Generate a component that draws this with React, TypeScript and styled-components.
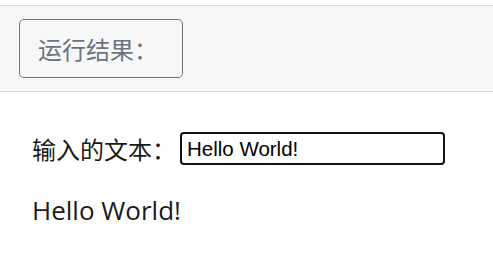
import styled, { createGlobalStyle } from 'styled-components';
import React, { useState } from 'react';

const GlobalStyle = createGlobalStyle`
    body {
        margin: 0;
        background: #ffffff;
        font-family: "Open Sans", "Noto Sans CJK SC", sans-serif;
        color: #212529;
    }
`

const Page = styled.div`
    padding-top: 5px;
`

const Toolbar = styled.div`
    display: flex;
    align-items: center;
    height: 85px;
    padding: 0 19px;
    background: #f7f7f7;
    border-top: 1px solid #dcdcdc;
    border-bottom: 1px solid #dcdcdc;
`

const ResultButton = styled.button`
    display: flex;
    align-items: center;
    box-sizing: border-box;
    width: 164px;
    height: 59px;
    padding: 0 0 0 18px;
    background: transparent;
    border: 1px solid #6c757d;
    border-radius: 5px;
    color: #6c757d;
    font-family: "Noto Sans CJK SC", sans-serif;
    font-size: 24px;
`

const Content = styled.div`
    padding: 40px 32px;
    display: flex;
    flex-direction: column;
    gap: 28px;
`

const Row = styled.label`
    display: flex;
    align-items: center;
    height: 33px;
    line-height: 33px;
    font-family: "Noto Sans CJK SC", sans-serif;
    font-size: 24px;
    color: #1a1a1a;
`

const TextInput = styled.input`
    box-sizing: border-box;
    width: 265px;
    height: 33px;
    margin-left: 4px;
    padding: 0 5px;
    border: 2px solid #111;
    border-radius: 4px;
    outline: none;
    font-family: "Liberation Sans", Arial, sans-serif;
    font-size: 20.5px;
    color: #000;
`

const Output = styled.div`
    font-family: "Open Sans", sans-serif;
    font-size: 26px;
    line-height: 34px;
    color: #1a1a1a;
`

function App() {
    const [text, setText] = useState('Hello World!')
    return (
        <Page>
            <GlobalStyle />
            <Toolbar>
                <ResultButton>运行结果：</ResultButton>
            </Toolbar>
            <Content>
                <Row>
                    输入的文本：
                    <TextInput value={text} onChange={e => setText(e.target.value)} />
                </Row>
                <Output>{text}</Output>
            </Content>
        </Page>
    )
}

export default App;
